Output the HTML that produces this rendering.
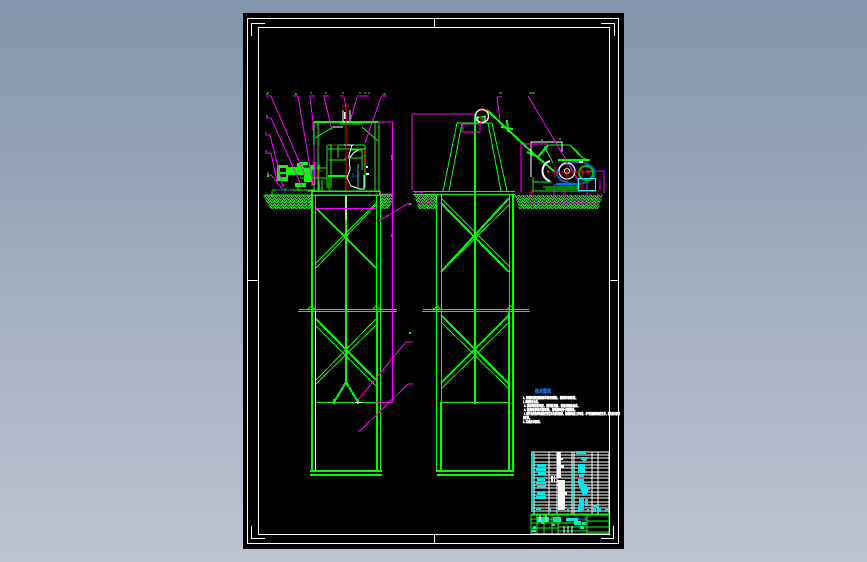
<!DOCTYPE html>
<html lang="zh">
<head>
<meta charset="utf-8">
<title>CAD drawing</title>
<style>
html,body{margin:0;padding:0;width:867px;height:562px;overflow:hidden;background:linear-gradient(180deg,#8494aa 0%,#a3aebf 50%,#bcc3d0 100%)}
svg{position:absolute;left:0;top:0;display:block}
text{font-family:"Liberation Sans","Noto Sans CJK SC",sans-serif}
</style>
</head>
<body>
<svg width="867" height="562" viewBox="0 0 867 562" xmlns="http://www.w3.org/2000/svg" shape-rendering="crispEdges" fill="none">
<defs>
<pattern id="h" width="4" height="3" patternUnits="userSpaceOnUse">
<rect width="4" height="3" fill="#00d000"/>
<rect x="0" y="0" width="1" height="1" fill="#000"/>
<rect x="2" y="1" width="1" height="1" fill="#000"/>
<rect x="3" y="2" width="1" height="1" fill="#000"/>
<rect x="1" y="2" width="1" height="1" fill="#000"/>
</pattern>
</defs>
<rect x="243" y="13" width="381" height="536" fill="#000"/>

<!-- sheet frame -->
<g stroke="#fff" stroke-width="1">
<rect x="247.5" y="18.5" width="371" height="525"/>
<rect x="258.5" y="27.5" width="351" height="507" stroke-width="1.2"/>
<path d="M251.5 36V23.5H265M601 23.5H614.5V36M251.5 526V538.5H265M601 538.5H613.5V526M247 280.5H258M609 280.5H619M434.5 18V27M434.5 534V544"/>
</g>

<!-- ground hatch -->
<g fill="url(#h)">
<polygon points="263,195 311,195 311,209 270,209"/>
<polygon points="381,195 392,195 392,203 388,209 381,209"/>
<polygon points="414,195 436,195 436,209 419,209"/>
<polygon points="515,195 603,195 598,209 519,209"/>
</g>

<!-- left tower -->
<g stroke="#00ff00" stroke-width="1">
<path stroke-width="2" d="M312 195V470M346 195V382M377 311V470"/>
<path d="M315.5 195V311M376.5 195V311M380.5 195V470"/>
<path d="M299 309.5H397M298 311.5H397M307 310L311 306L316 310M372 310L376 306L381 310"/>
<path d="M312 191.5H380M312 195.5H380M264 195H392"/>
<path stroke-width="2" d="M316 208L376 268M316 319L376 380"/>
<path d="M376 203L316 263M376 205L316 268M376 319L316 380M376 325L316 384M316 326L376 386"/>
<path stroke-width="2" d="M346 382L334 402M346 382L358 402"/>
<path d="M316 402.5H376"/>
<path stroke-width="2" d="M310 471H382M310 475H382"/>
<path stroke-width="2" d="M334 399V404M358 399V404"/>
</g>
<path stroke="#fff" d="M315.5 311V470M346 196V220M312 191V195M380 191V195M355 402.5H362" />

<!-- right tower -->
<g stroke="#00ff00" stroke-width="1">
<path stroke-width="2" d="M475 194V402M509 311V471M441 402V471M513 195V471"/>
<path d="M436.5 195V471M441.5 195V402M509.5 195V311"/>
<path d="M423 309.5H529M422 311.5H530M432 310L438 306L441 310M506 310L511 306L515 310"/>
<path d="M413 191.5H515M413 194.5H515"/>
<path stroke-width="2" d="M441 203L509 272M509 198L441 272M441 315L509 384M509 315L441 383"/>
<path d="M441 198L509 266M509 205L441 272M441 322L509 389M509 322L441 389"/>
<path d="M441 402.5H509"/>
<path stroke-width="2" d="M436 471H514M437 475H514M475 400V404"/>
</g>
<path stroke="#fff" d="M475 191V195"/>

<!-- left machine: building and hoist -->
<g stroke="#00ff00" stroke-width="1">
<path stroke-width="2" d="M314 122H378"/>
<path d="M314 122V191M318 122V191M375 122V191M379 122V191M315 138L333 127M378 141L362 127M340 124L362 124"/>
<path d="M328 145H365M328 149H365M327 145V188M331 145V188M365 145V188"/>
<path d="M329 160H345V158M329 176H346M329 190V176M338 146V158M350 150H362V170M350 158H362"/>
<path d="M308 191H380M272 191V197M272 190H315"/>
<path stroke-width="2" d="M328 176H348"/>
<path d="M300 178H327M290 168H327M312 167V186M319 165V191M322 180V191M298 186V191M285 188V191"/>
</g>
<g fill="#00ff00">
<rect x="277" y="165" width="11" height="16"/>
<rect x="288" y="167" width="16" height="8"/>
<rect x="297" y="163" width="6" height="6"/>
<rect x="300" y="162" width="8" height="3"/>
<rect x="295" y="183" width="11" height="4"/>
<rect x="304" y="168" width="8" height="14"/>
<rect x="310" y="165" width="4" height="5"/>
<rect x="267" y="174" width="2" height="3"/>
</g>
<rect x="280" y="168" width="6" height="4" fill="#000"/>
<rect x="280" y="174" width="6" height="3" fill="#000"/>
<g stroke="#fff">
<path d="M333 127H343M343 122H350M343 110V122M350 110V122M345 106H349M354 145H344M352 145L349 155L350 170L347 178L351 186L360 189H364V175M350 158C352 154 354 152 358 150"/>
<path stroke-width="2" d="M366 167H368M366 174H369"/>
<path stroke-width="2" d="M345 112V119"/>
</g>
<g stroke="#ff0000">
<path stroke-width="1.4" d="M346 107V191"/>
<path d="M319 170V181M318 171H323M342 106H349M332 145H337M358 146V148"/>
</g>
<g fill="#ff0000">
<rect x="364" y="150" width="2" height="3"/>
<rect x="364" y="158" width="2" height="3"/>
<rect x="364" y="167" width="2" height="3"/>
</g>
<path stroke="#0070d0" d="M276 190H290M355 176H358M353 173V178"/>
<path stroke="#00d0d0" d="M358 164V190"/>

<!-- left leaders (magenta) -->
<g stroke="#ff00ff" stroke-width="1">
<path d="M266 96H271L305 175M293 96H298L313 185M309 96H315M310 97L313 122L315 185"/>
<path d="M323 96H329M324 97L332 130M344 96H340M344 97L346 107M357 96H369M357 97L350 122M381 96H387M381 97L365 143"/>
<path d="M266 118H271L302 187M265 135H270L283 187M265 153H271L277 182M267 175H271L283 190"/>
<path d="M378 122H392.5V402M376 402.5H392.5M379 194H392.5M316 208.5H376"/>
<path d="M378 221L391 214L407 204H410"/>
<path d="M358 400L406 342H413"/>
<path d="M359 432L408 384H413"/>
<path d="M392 234V237M392 155V160" stroke-width="2"/>
</g>
<g fill="#00ff00">
<rect x="409" y="332" width="2" height="2"/>
<rect x="409" y="203" width="2" height="2"/>
</g>
<g stroke="#00ff00">
<path d="M267 93H269M267 95V93M295 94H297M296 93V95M310 93H312M325 93H327M342 93H344M359 93H361M364 93H366M368 93H370M383 94H386M267 115V117M266 132V134M266 150V152M268 172V174"/>
</g>

<!-- right A-frame -->
<g stroke="#00ff00" stroke-width="1">
<path d="M457 123H492M457 123L443 191M462 123L449 191M488 123L501 191M492 123L507 191"/>
<path stroke-width="2" d="M475 115V194"/>
<path d="M475 118L486 116M476 116V122M483 116V122"/>
<path stroke-width="2" d="M487 110L505 127L535 155L555 172"/>
<path stroke-width="2" d="M507 120L508 132M501 127L513 129"/>
<path stroke-width="1" d="M531 172V177M533 182H552M533 177V191M531 191H596M543 187H578M545 189H578"/>
<path stroke-width="2" d="M538 157L548 145M527 152L535 156"/>
<path d="M548 145H570L583 158L588 160M544 146L553 163M578 190V178"/>
<path stroke-width="2" d="M573 148L580 155"/>
</g>
<circle cx="482" cy="116" r="6.5" stroke="#fff" stroke-width="1.4" shape-rendering="auto"/>
<path stroke="#ff2020" d="M477 111C479 108 485 108 487 111M481 118V123" shape-rendering="auto"/>
<path stroke="#fff" d="M478 116V122M485 116V122M531 177V142H562V152"/>
<path stroke="#fff" stroke-width="2" d="M550 161C540 164 540 178 550 181" shape-rendering="auto"/>
<g stroke="#ff00ff" stroke-width="1">
<path d="M412 114H475M412 114V190M413 191V192"/>
<path d="M462 124V132H480V124M462 124H479"/>
<path d="M497 97H502M497 97L500 120"/>
<path d="M528 96L568 163L578 180"/>
<path d="M521 144H548M521 144V192"/>
<path d="M554 190V200M553 185H578M586 171H604V193M587 178V197M600 180V190"/>
<path d="M530 203H598V193M530 203V192M571 200H586M564 205V190"/>
<path d="M415 194V192H423M420 194V203H435M428 203V198"/>
<path d="M406 204L412 204" />
</g>
<g stroke="#00ff00"><path d="M499 93H502M529 93H535"/></g>
<ellipse cx="576" cy="173" rx="19" ry="11" stroke="#0060d0" stroke-width="2" shape-rendering="auto"/>
<circle cx="586" cy="173" r="7" stroke="#00c000" stroke-width="2" shape-rendering="auto"/>
<circle cx="567" cy="171" r="8" stroke="#fff" stroke-width="1.2" shape-rendering="auto"/>
<circle cx="567" cy="171" r="2.5" stroke="#fff"/>
<path stroke="#ff0000" stroke-width="1.4" d="M552 172H592M567 160V182M555 165V178M582 165V190"/>
<path stroke="#0070e0" stroke-width="2" d="M556 184H578"/>
<rect x="578.5" y="178.5" width="17" height="12" stroke="#00ffff"/>
<path stroke="#00ffff" d="M559 139H561M541 140H543"/>
<path stroke="#fff" stroke-width="2" d="M579 162H583"/>
<path stroke="#00ff00" stroke-width="2" d="M558 160L590 160"/>
<g fill="#ff0000">
<rect x="531" y="190" width="2" height="3"/>
<rect x="547" y="170" width="2" height="3"/>
</g>

<!-- technical notes -->
<text x="535" y="393" font-size="5" font-weight="700" fill="#0080ff" stroke="#0080ff" stroke-width=".3" textLength="16" lengthAdjust="spacingAndGlyphs">技术要求</text>
<g fill="#fff" stroke="#fff" stroke-width=".5" font-size="3.6" font-weight="700" text-rendering="geometricPrecision" shape-rendering="auto">
<text x="523" y="399" textLength="55" lengthAdjust="spacingAndGlyphs">1. 安装时按图纸要求检查调整，保证井架垂直。</text>
<text x="523" y="403" textLength="17" lengthAdjust="spacingAndGlyphs">2. 焊缝质量合格。</text>
<text x="524" y="407" textLength="56" lengthAdjust="spacingAndGlyphs">3. 钢丝绳安装牢固，运转前润滑，检查减速器油位。</text>
<text x="524" y="411" textLength="53" lengthAdjust="spacingAndGlyphs">4. 各运动部件灵活可靠，滑轮转动无卡阻现象。</text>
<text x="524" y="415" textLength="96" lengthAdjust="spacingAndGlyphs">5. 提升机安装完毕后进行空载及负载试运转，确保制动器工作可靠，电气控制系统运行正常，满足设计要求</text>
<text x="523" y="419" textLength="9" lengthAdjust="spacingAndGlyphs">要求。</text>
<text x="523" y="423" textLength="19" lengthAdjust="spacingAndGlyphs">6. 其他技术要求。</text>
</g>

<!-- parts table -->
<g stroke="#fff" stroke-width="1">
<path d="M531 452H609M531 455H609M531 458H609M531 462H609M531 465H609M531 468H609M531 472H609M531 475H609M531 478H609M531 482H609M531 485H609M531 488H609M531 492H609M531 495H609M531 498H609M531 502H609M531 505H609M531 508H609M531 511H609"/>
<path d="M534 452V514M549 452V514M557 452V514M572 452V514M574 452V514M592 452V514M598 452V514M609 452V534"/>
</g>
<g fill="#fff">
<rect x="557" y="452" width="4" height="26"/>
<rect x="557" y="458" width="6" height="2"/>
<rect x="557" y="465" width="7" height="3"/>
<rect x="557" y="472" width="4" height="6"/>
<rect x="557" y="480" width="8" height="2"/>
<rect x="557" y="484" width="5" height="2"/>
<rect x="558" y="480" width="7" height="30"/>
<rect x="564" y="492" width="3" height="3"/>
<rect x="551" y="476" width="2" height="6"/>
<rect x="554" y="476" width="1" height="6"/>
</g>
<g fill="#00e8e8">
<rect x="531" y="452" width="3" height="60" opacity=".85"/>
<rect x="576" y="451" width="10" height="3"/>
<rect x="581" y="457" width="6" height="3"/>
<rect x="583" y="460" width="3" height="2"/>
<rect x="537" y="464" width="9" height="3"/>
<rect x="536" y="468" width="10" height="3"/>
<rect x="538" y="472" width="8" height="3"/>
<rect x="537" y="478" width="8" height="3"/>
<rect x="536" y="482" width="10" height="2"/>
<rect x="537" y="485" width="9" height="3"/>
<rect x="537" y="492" width="8" height="3"/>
<rect x="536" y="496" width="10" height="3"/>
<rect x="578" y="464" width="7" height="9"/>
<rect x="579" y="474" width="5" height="3"/>
<rect x="578" y="479" width="6" height="5"/>
<rect x="579" y="484" width="8" height="3"/>
<rect x="580" y="487" width="10" height="3"/>
<rect x="581" y="490" width="7" height="3"/>
<rect x="582" y="493" width="5" height="2"/>
<rect x="579" y="498" width="5" height="8"/>
<rect x="585" y="499" width="3" height="7"/>
<rect x="578" y="506" width="6" height="4"/>
<rect x="575" y="510" width="7" height="2"/>
<rect x="572" y="465" width="2" height="40" opacity=".7"/>
<rect x="593" y="508" width="3" height="4"/>
<rect x="597" y="508" width="4" height="4"/>
<rect x="593" y="505" width="6" height="2"/>
<rect x="536" y="508" width="5" height="2"/>
<rect x="549" y="509" width="2" height="3"/>
<rect x="556" y="510" width="2" height="2"/>
<rect x="567" y="509" width="2" height="3"/>
<rect x="587" y="509" width="2" height="3"/>
<rect x="605" y="509" width="3" height="2"/>
<rect x="537" y="517" width="12" height="5"/>
<rect x="553" y="517" width="8" height="5"/>
<rect x="566" y="518" width="12" height="3"/>
<rect x="574" y="521" width="7" height="4"/>
<rect x="580" y="526" width="4" height="3"/>
<rect x="582" y="522" width="4" height="3"/>
<rect x="533" y="526" width="3" height="3"/>
<rect x="541" y="521" width="3" height="3"/>
<rect x="552" y="524" width="3" height="2"/>
<rect x="531" y="530" width="5" height="2"/>
</g>
<!-- title block -->
<g stroke="#00ff00" stroke-width="1">
<path stroke-width="2" d="M531 514.5H609"/>
<path d="M531 514V534M537 514V534M544 514V534M552 514V534M558 514V534M587 514V534M609 514V534"/>
<path d="M587 521H609M558 523H587M558 527H609M587 532H609M558 531H587M531 519H558M531 523H558M531 528H558"/>
</g>
<path stroke="#fff" stroke-width="1" d="M564 526V533M568 526V533M572 526V533M540 515V522M546 515V522M531 534H609"/>
<text x="566" y="520" font-size="3" fill="#00e8e8" shape-rendering="auto">井架提升机总图</text>
</svg>
</body>
</html>
